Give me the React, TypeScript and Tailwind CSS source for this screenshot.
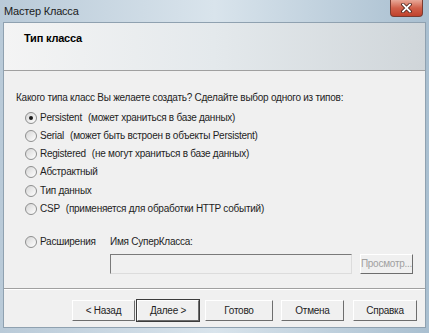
import React from "react";

const options = [
  { label: "Persistent", note: "(может храниться в базе данных)", checked: true },
  { label: "Serial", note: "(может быть встроен в объекты Persistent)" },
  { label: "Registered", note: "(не могут храниться в базе данных)" },
  { label: "Абстрактный" },
  { label: "Тип данных" },
  { label: "CSP", note: "(применяется для обработки HTTP событий)" },
];

function Radio({ checked }: { checked?: boolean }) {
  return (
    <span className="w-[12px] h-[12px] rounded-full border border-[#8e8f8f] bg-gradient-to-br from-[#d6d6d6] to-[#ffffff] flex items-center justify-center shrink-0">
      {checked && <span className="w-[4px] h-[4px] rounded-full bg-[#1a1a1a]" />}
    </span>
  );
}

function Btn({ children, focused, disabled, className }: { children: React.ReactNode; focused?: boolean; disabled?: boolean; className?: string }) {
  return (
    <button
      className={
        "flex items-center justify-center bg-[#f0f0f0] border-t border-l border-t-white border-l-white border-b border-r border-b-[#6d6d6d] border-r-[#6d6d6d] " +
        (focused ? "outline outline-1 outline-[#3c3c3c] " : "") +
        (disabled ? "text-[#a0a0a0] " : "text-[#1e1e1e] ") +
        (className ?? "")
      }
    >
      {children}
    </button>
  );
}

export default function App() {
  return (
    <div
      className="w-[429px] h-[333px] flex flex-col bg-gradient-to-r from-[#b9cad8] via-[#d9e4ec] to-[#a9bfd0] text-[10px] tracking-[-0.25px] leading-none"
      style={{ fontFamily: '"Liberation Sans", Arial, sans-serif' }}
    >
      <div className="h-[22px] flex items-center justify-between pl-[4px] shrink-0">
        <span className="text-[11px] tracking-[-0.2px] text-[#1b1b1b]">Мастер Класса</span>
        <div className="self-start mr-[6px] w-[33px] h-[17px] rounded-b-[4px] border border-t-0 border-[#7a3b30] bg-gradient-to-b from-[#e8a898] via-[#d0604a] to-[#c0412b] flex items-center justify-center">
          <svg width="11" height="10" viewBox="0 0 11 10">
            <path d="M2 1.5 L9 8.5 M9 1.5 L2 8.5" stroke="#4a2018" strokeWidth="3.4" strokeLinecap="square" />
            <path d="M2 1.5 L9 8.5 M9 1.5 L2 8.5" stroke="#ffffff" strokeWidth="1.8" strokeLinecap="square" />
          </svg>
        </div>
      </div>

      <div className="flex-1 mx-[3px] mb-[5px] border border-[#8fa1b0] flex flex-col bg-[#f0f0f0]">
        <div className="h-[48px] shrink-0 border-b border-[#a0a0a0] bg-gradient-to-r from-[#f4f4f4] via-[#e4e9ec] to-[#d0d6da] px-[20px] pt-[10px]">
          <span className="font-bold text-[11px] tracking-[-0.2px] text-black">Тип класса</span>
        </div>

        <div className="flex-1 px-[12px] pt-[22px]">
          <div className="text-[#1e1e1e]">Какого типа класс Вы желаете создать? Сделайте выбор одного из типов:</div>
          <div className="flex flex-col gap-[5.3px] mt-[8px] pl-[9px]">
            {options.map((o) => (
              <div key={o.label} className="h-[13px] flex items-center gap-[3px] text-[#1e1e1e]">
                <Radio checked={o.checked} />
                <span>{o.label}</span>
                {o.note && <span className="ml-[3px]">{o.note}</span>}
              </div>
            ))}
          </div>
          <div className="flex mt-[20px] pl-[9px]">
            <div className="h-[13px] flex items-center gap-[3px] w-[85px] shrink-0 text-[#1e1e1e]">
              <Radio />
              <span>Расширения</span>
            </div>
            <div className="flex flex-col shrink-0">
              <span className="h-[13px] flex items-center text-[#1e1e1e]">Имя СуперКласса:</span>
              <div className="flex gap-[8px] mt-[6px]">
                <div className="w-[242px] h-[20px] bg-[#f0f0f0] border border-t-[#7a7a7a] border-l-[#7a7a7a] border-b-[#dcdcdc] border-r-[#dcdcdc]" />
                <Btn disabled className="w-[53px] h-[20px]">Просмотр...</Btn>
              </div>
            </div>
          </div>
        </div>

        <div className="h-[2px] border-t border-[#a0a0a0] border-b border-b-white" />
        <div className="h-[37px] shrink-0 flex items-start pt-[10px] pl-[68px]">
          <Btn className="w-[63px] h-[21px]">&lt; Назад</Btn>
          <Btn focused className="w-[62px] h-[21px] ml-[2px]">Далее &gt;</Btn>
          <Btn className="w-[68px] h-[21px] ml-[6px]">Готово</Btn>
          <Btn className="w-[63px] h-[21px] ml-[8px]">Отмена</Btn>
          <Btn className="w-[64px] h-[21px] ml-[9px]">Справка</Btn>
        </div>
      </div>
    </div>
  );
}
